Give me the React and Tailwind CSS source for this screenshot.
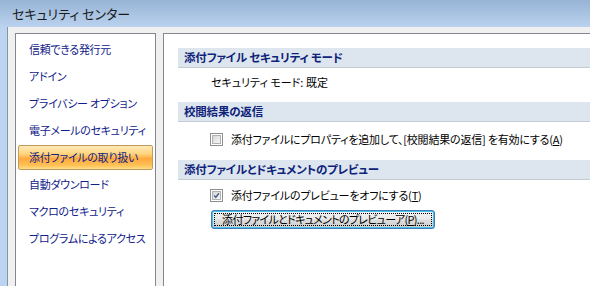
import React from "react";

const jp = "font-['Noto_Sans_CJK_JP','Noto_Sans',sans-serif] [font-feature-settings:'palt']";

const navItems = [
  "信頼できる発行元",
  "アドイン",
  "プライバシー オプション",
  "電子メールのセキュリティ",
  "添付ファイルの取り扱い",
  "自動ダウンロード",
  "マクロのセキュリティ",
  "プログラムによるアクセス",
];

function Band({ children, className = "" }) {
  return (
    <div
      className={`h-[20px] bg-[#dde6ee] border-b border-[#c3ccd5] pl-[6px] flex items-center text-[11.5px] font-bold text-[#0e2379] leading-none whitespace-nowrap tracking-[-0.2px] ${className}`}
    >
      {children}
    </div>
  );
}

function Checkbox({ checked }) {
  return (
    <div className="w-[13px] h-[13px] border border-[#8e8f8f] bg-white p-[1px] shrink-0">
      <div className="w-full h-full border border-[#aeb0b2] bg-gradient-to-br from-[#d6d6d6] to-[#f7f7f7] relative">
        {checked && (
          <svg viewBox="0 0 9 9" className="absolute inset-0 w-full h-full">
            <path d="M1.5 4.5 L3.6 6.8 L7.6 1.6" fill="none" stroke="#4a5f8e" strokeWidth="1.8" />
          </svg>
        )}
      </div>
    </div>
  );
}

export default function App() {
  return (
    <div className={`w-[590px] h-[286px] overflow-hidden bg-[#f0f0f0] flex flex-col ${jp}`}>
      <div className="h-[27px] shrink-0 bg-gradient-to-b from-[#97b3d5] to-[#bad2ee] flex items-center pl-[12px]">
        <span className="text-[13px] text-[#1b1b1b] leading-none">セキュリティ センター</span>
      </div>
      <div className="flex flex-1 min-h-0">
        <div className="w-[8px] shrink-0 bg-[#bcd4ef] border-r border-[#8595a8]" />
        <div className="flex flex-1 min-w-0 pt-[6px] pl-[7px] gap-[7px]">
          <div className="w-[141px] shrink-0 bg-white border border-[#828790] border-b-0 pt-[2px] px-[2px]">
            {navItems.map((t, i) =>
              i === 4 ? (
                <div key={t} className="h-[27px] py-[1px]">
                  <div className="h-[25px] rounded-[2px] border border-[#c29a5e] bg-[linear-gradient(to_bottom,#ffeab8_0%,#ffd47c_35%,#ffa93e_55%,#ffc257_85%,#ffe08a_100%)] flex items-center pl-[10px] text-[11px] text-[#0f1f86] leading-none whitespace-nowrap tracking-[-0.3px]">
                    {t}
                  </div>
                </div>
              ) : (
                <div key={t} className="h-[27px] flex items-center pl-[11px] text-[11px] text-[#10218a] leading-none whitespace-nowrap tracking-[-0.3px]">
                  {t}
                </div>
              )
            )}
          </div>
          <div className="flex-1 min-w-0 bg-white border-t border-l border-[#828790] pt-[14px] pl-[14px]">
            <Band>添付ファイル セキュリティ モード</Band>
            <div className="h-[34px] pl-[33px] flex items-start pt-[9px] text-[11px] text-black leading-none">
              セキュリティ モード: 既定
            </div>
            <Band>校閲結果の返信</Band>
            <div className="flex items-center gap-[8px] pl-[32px] mt-[11px] h-[13px] text-[11px] text-black leading-none whitespace-nowrap tracking-[-0.2px]">
              <Checkbox checked={false} />
              <span>
                添付ファイルにプロパティを追加して、[校閲結果の返信] を有効にする(<span className="underline">A</span>)
              </span>
            </div>
            <Band className="mt-[14px]">添付ファイルとドキュメントのプレビュー</Band>
            <div className="flex items-center gap-[8px] pl-[32px] mt-[9px] h-[13px] text-[11px] text-black leading-none whitespace-nowrap tracking-[-0.2px]">
              <Checkbox checked={true} />
              <span>
                添付ファイルのプレビューをオフにする(<span className="underline">T</span>)
              </span>
            </div>
            <div className="pl-[33px] mt-[8px]">
              <div className="w-[224px] h-[19px] rounded-[3px] border border-[#3c7fb1] p-[1px] bg-[#48bff0]">
                <div className="w-full h-full rounded-[1px] bg-[linear-gradient(to_bottom,#f2f2f2_0%,#ebebeb_45%,#dddddd_55%,#cfcfcf_100%)] p-[1px]">
                  <div className="w-full h-full border border-dotted border-black flex items-center justify-center text-[11px] text-black leading-none whitespace-nowrap tracking-[-0.7px]">
                    添付ファイルとドキュメントのプレビューア(<span className="underline">P</span>)...
                  </div>
                </div>
              </div>
            </div>
          </div>
        </div>
      </div>
    </div>
  );
}
